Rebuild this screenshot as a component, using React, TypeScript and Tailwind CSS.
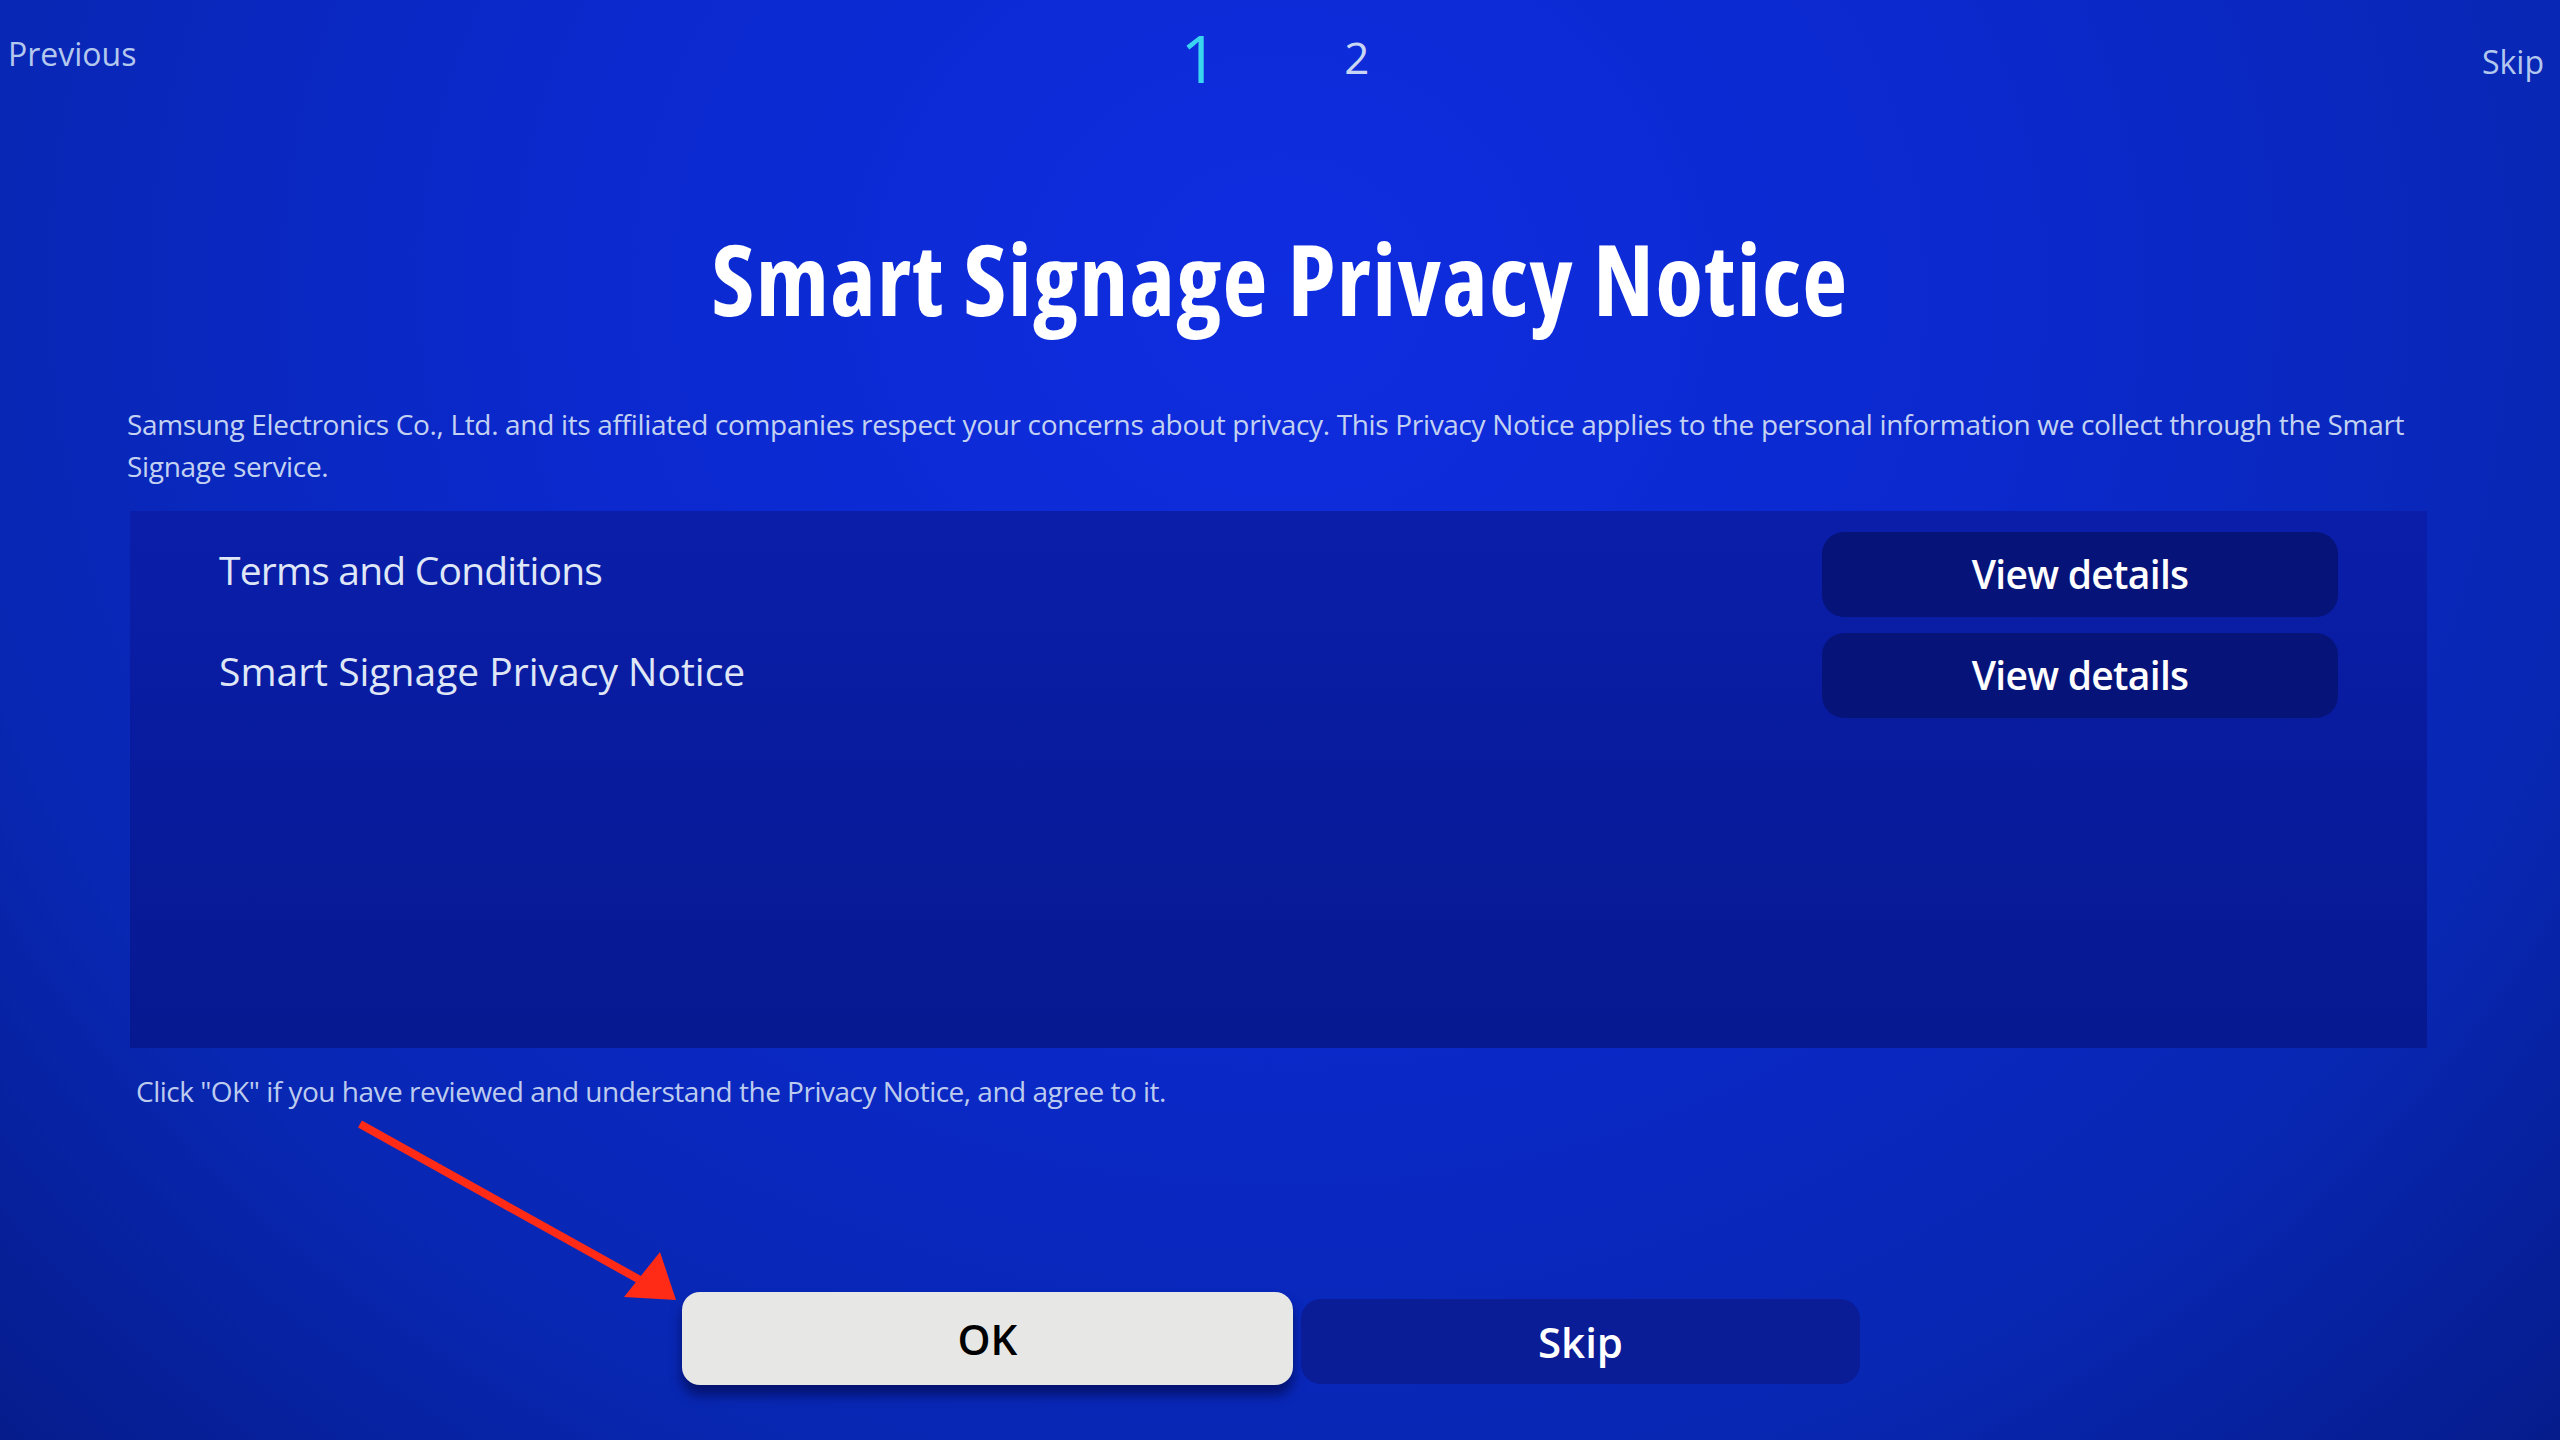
export default function App() {
  return (
    <div className="relative w-[2560px] h-[1440px] overflow-hidden bg-[radial-gradient(ellipse_at_50%_20%,#0f2de0_0%,#0b29cd_40%,#0827b2_75%,#061c8c_100%)] font-['Open_Sans','Noto_Sans',sans-serif] text-white">
      <div className="flex flex-col h-full">
        {/* top bar */}
        <div className="grid grid-cols-3 h-[150px]">
          <div className="pl-[8px] pt-[32px]">
            <span className="text-[32px] leading-[44px] text-[#b4c8ee]">Previous</span>
          </div>
          <div className="flex justify-center items-center gap-[126px] h-[114px] pr-[10px]">
            <span className="text-[66px] leading-none font-normal text-[#3ad6f0]">1</span>
            <span className="text-[44px] leading-none font-normal text-[#c8d6f4]">2</span>
          </div>
          <div className="flex justify-end pr-[16px] pt-[40px]">
            <span className="text-[32px] leading-[44px] text-[#b4c8ee]">Skip</span>
          </div>
        </div>

        {/* title */}
        <h1 className="text-center text-[98px] leading-[120px] font-bold text-white [font-stretch:75%] tracking-[1.3px] mt-[68px]">
          Smart Signage Privacy Notice
        </h1>

        {/* description */}
        <div className="pl-[127px] mt-[65px] text-[28px] leading-[42px] text-[#c4d2f2] tracking-[-0.33px]">
          <p className="whitespace-nowrap">
            Samsung Electronics Co., Ltd. and its affiliated companies respect your concerns about privacy. This Privacy Notice applies to the personal information we collect through the Smart
          </p>
          <p className="whitespace-nowrap">Signage service.</p>
        </div>

        {/* panel */}
        <div className="ml-[130px] mr-[133px] mt-[24px] h-[537px] bg-[linear-gradient(180deg,#0a1eaa_0%,#081b9c_55%,#071990_100%)] pt-[21px] pl-[89px] pr-[89px] flex flex-col gap-[16px]">
          <div className="flex items-center justify-between">
            <span className="text-[39px] leading-none text-[#dfe6f6] tracking-[-0.8px] -mt-[10px]">Terms and Conditions</span>
            <button className="w-[516px] h-[85px] rounded-[22px] bg-[#061479] text-[39px] font-semibold text-white tracking-[-0.7px]">
              View details
            </button>
          </div>
          <div className="flex items-center justify-between">
            <span className="text-[39px] leading-none text-[#dfe6f6] -mt-[10px]">Smart Signage Privacy Notice</span>
            <button className="w-[516px] h-[85px] rounded-[22px] bg-[#061479] text-[39px] font-semibold text-white tracking-[-0.7px]">
              View details
            </button>
          </div>
        </div>

        {/* footer note */}
        <p className="pl-[136px] mt-[22px] text-[28px] leading-[42px] text-[#bccbee] tracking-[-0.5px]">
          Click "OK" if you have reviewed and understand the Privacy Notice, and agree to it.
        </p>

        {/* bottom buttons */}
        <div className="flex pl-[682px] mt-[180px] gap-[8px] items-start">
          <button className="w-[611px] h-[93px] rounded-[18px] bg-[#e7e7e5] text-[42px] font-semibold text-black shadow-[0_10px_12px_rgba(3,10,80,0.7)]">
            OK
          </button>
          <button className="w-[559px] h-[85px] mt-[7px] rounded-[20px] bg-[#0a1c96] text-[42px] font-semibold text-white">
            Skip
          </button>
        </div>
      </div>

      {/* red annotation arrow */}
      <svg className="absolute left-0 top-0 pointer-events-none" width="2560" height="1440" viewBox="0 0 2560 1440">
        <line x1="360" y1="1124" x2="640" y2="1280" stroke="#ff2b17" strokeWidth="8" strokeLinecap="butt" />
        <polygon points="676,1300 624,1297 660,1252" fill="#ff2b17" />
      </svg>
    </div>
  );
}
